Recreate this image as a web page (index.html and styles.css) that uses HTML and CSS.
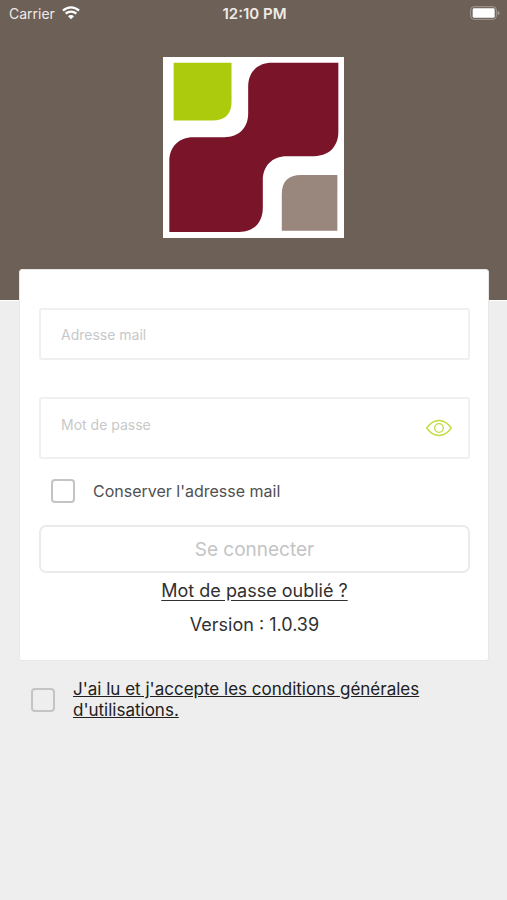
FILE: index.html
```html
<!DOCTYPE html>
<html lang="fr">
<head>
<meta charset="utf-8">
<meta name="viewport" content="width=device-width, initial-scale=1">
<title>Connexion</title>
<link rel="stylesheet" href="styles.css">
</head>
<body>
<header class="hero">
  <div class="status">
    <div class="status-left">
      <span>Carrier</span>
      <svg class="wifi" viewBox="0 0 54 42" aria-hidden="true">
        <path d="M3 14C17 1 37 1 51 14" />
        <path d="M11 23C20 15 34 15 43 23" />
        <path class="wifi-dot" d="M18 31C23 26 31 26 36 31L27 40Z" />
      </svg>
    </div>
    <span class="status-time">12:10 PM</span>
    <svg class="battery" viewBox="0 0 90 42" aria-hidden="true">
      <rect class="battery-case" x="2" y="2" width="77" height="38" rx="10" />
      <rect class="battery-level" x="8" y="7" width="66" height="28" rx="4" />
      <path class="battery-tip" d="M83 14Q89 16 89 21Q89 26 83 28Z" />
    </svg>
  </div>
  <svg class="logo" viewBox="28 27 544 544" role="img" aria-label="Logo">
    <rect x="28" y="27" width="544" height="544" fill="#fff" />
    <path fill="#adcb0d" d="M60 44H234V160Q234 218 176 218H60Z" />
    <path fill="#7a1429" d="M356 44H555V252C555 296 527 325 483 325H400C356 325 328 354 328 398V480C328 524 301 553 257 553H47V341C47 297 75 268 119 268H212C256 268 284 240 284 196V116C284 72 312 44 356 44Z" />
    <path fill="#99877e" d="M552 382V549H385V440Q385 382 443 382Z" />
  </svg>
</header>
<main>
  <form class="card">
    <input class="field" type="email" placeholder="Adresse mail" aria-label="Adresse mail">
    <div class="password">
      <input class="field field-tall" type="password" placeholder="Mot de passe" aria-label="Mot de passe">
      <button class="reveal" type="button" aria-label="Afficher le mot de passe">
        <svg viewBox="0 0 78 50" aria-hidden="true">
          <path d="M2 25C24-5 54-5 76 25C54 55 24 55 2 25Z" />
          <circle cx="39" cy="25" r="13" />
        </svg>
      </button>
    </div>
    <label class="remember"><input class="check" type="checkbox"><span>Conserver l'adresse mail</span></label>
    <button class="submit" type="submit" disabled>Se connecter</button>
    <a class="forgot" href="#">Mot de passe oublié ?</a>
    <p class="version">Version : 1.0.39</p>
  </form>
  <div class="terms">
    <input class="check" type="checkbox" id="terms" aria-label="Accepter les conditions générales">
    <a href="#">J'ai lu et j'accepte les conditions générales d'utilisations.</a>
  </div>
</main>
</body>
</html>
```
FILE: styles.css
```css
* {
  box-sizing: border-box;
}

body {
  margin: 0;
  min-height: 100vh;
  background: #eee;
  color: #303030;
  font-family: Inter, "Liberation Sans", sans-serif;
}

.hero {
  display: flex;
  flex-direction: column;
  align-items: center;
  height: 301px;
  background: #6c6057;
  border-bottom: 1px solid #fff;
}

.status {
  display: grid;
  grid-template-columns: 1fr auto 1fr;
  align-items: center;
  width: 100%;
  height: 26px;
  padding: 0 7px 0 9px;
  color: #f0eae6;
  font-size: 14px;
}

.status-left {
  display: flex;
  align-items: center;
  gap: 7px;
}

.status-time {
  font-size: 15px;
  font-weight: 600;
}

.wifi {
  width: 18px;
  height: 14px;
  fill: none;
  stroke: #fff;
  stroke-width: 7;
}

.wifi .wifi-dot {
  fill: #fff;
  stroke: none;
}

.battery {
  justify-self: end;
  width: 30px;
  height: 14px;
}

.battery-case {
  fill: none;
  stroke: #a39b95;
  stroke-width: 3;
}

.battery-level {
  fill: #fff;
}

.battery-tip {
  fill: #a39b95;
}

.logo {
  width: 181px;
  height: 181px;
  margin-top: 31px;
}

.card {
  position: relative;
  display: flex;
  flex-direction: column;
  margin: -32px 18px 0 19px;
  padding: 38px 18px 23px 19px;
  background: #fff;
  border: 1px solid #e8e8e8;
  border-radius: 3px;
}

.field {
  width: 100%;
  height: 52px;
  padding: 0 20px;
  background: #fff;
  border: 2px solid #f0f0f0;
  border-radius: 3px;
  color: #303030;
  font: 14px Inter, "Liberation Sans", sans-serif;
}

.field::placeholder {
  color: #c8c8c8;
}

.password {
  position: relative;
  margin-top: 37px;
}

.field-tall {
  display: block;
  height: 62px;
  padding: 0 60px 8px 20px;
}

.reveal {
  position: absolute;
  top: 50%;
  right: 18px;
  width: 26px;
  height: 18px;
  margin-top: -9px;
  padding: 0;
  border: 0;
  background: none;
}

.reveal svg {
  display: block;
  width: 26px;
  height: 18px;
  fill: none;
  stroke: #c0dc3c;
  stroke-width: 4;
}

.check {
  flex: none;
  appearance: none;
  width: 24px;
  height: 24px;
  margin: 0;
  border: 2px solid #c4c4c4;
  border-radius: 4px;
}

.remember {
  display: flex;
  align-items: center;
  gap: 18px;
  margin: 20px 12px 22px;
  color: #505050;
  font-size: 16px;
}

.submit {
  height: 48px;
  border: 2px solid #ebebeb;
  border-radius: 7px;
  background: #fff;
  color: #c4c4c4;
  font: 19px Inter, "Liberation Sans", sans-serif;
}

.forgot {
  align-self: center;
  margin-top: 6px;
  color: #303030;
  font-size: 18px;
  line-height: 24px;
  text-underline-offset: 3px;
}

.version {
  margin: 10px 0 0;
  font-size: 18px;
  line-height: 24px;
  text-align: center;
}

.terms {
  display: flex;
  align-items: center;
  gap: 18px;
  margin: 18px 80px 0 31px;
}

.terms a {
  color: #202020;
  font-size: 17px;
  line-height: 21px;
}
```
